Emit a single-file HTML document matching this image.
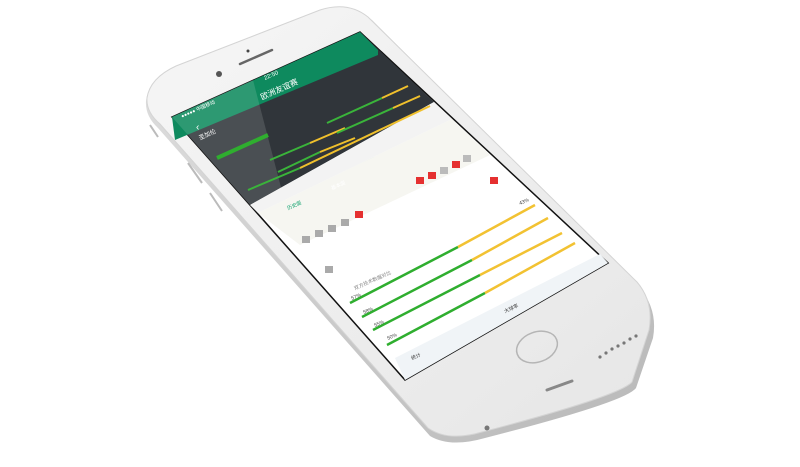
<!DOCTYPE html>
<html><head><meta charset="utf-8"><style>
html,body{margin:0;padding:0;background:#fff;width:800px;height:467px;overflow:hidden}
svg{display:block}
text{font-family:"Liberation Sans","Noto Sans CJK SC",sans-serif}
</style></head><body>
<svg width="800" height="467" viewBox="0 0 800 467" xmlns="http://www.w3.org/2000/svg">
<defs>
<linearGradient id="body" x1="0" y1="0" x2="1" y2="1">
<stop offset="0" stop-color="#f6f6f6"/><stop offset="1" stop-color="#e6e6e6"/>
</linearGradient>
<linearGradient id="edge" x1="0" y1="0" x2="1" y2="1">
<stop offset="0" stop-color="#e0e0e0"/><stop offset="1" stop-color="#b8b8b8"/>
</linearGradient>
</defs>
<path d="M146,101 Q148,80 175,68 L320,12 Q350,2 372,20 L640,288 Q658,310 653,338 L636,388 Q626,402 485,438 Q450,448 430,436 L158,128 Q145,116 146,101 Z" fill="url(#edge)"/>
<path d="M147,98 Q150,78 176,66 L320,10 Q348,1 368,17 L637,282 Q654,302 649,330 L632,382 Q620,396 482,432 Q448,442 428,428 L160,124 Q146,112 147,98 Z" fill="url(#body)" stroke="#d4d4d4" stroke-width="1"/>
<polygon points="172,117 360,32 608,263 405,380" fill="#fff" stroke="#111" stroke-width="1.5"/>
<polygon points="172,117 360,32 434,102 250,205" fill="#30353a"/>
<polygon points="172,117 360,32 378,50 378,55 175,140" fill="#0e8a5e"/>
<polygon points="172,117 253,80 283,195 250,205" fill="#ffffff" opacity="0.13"/>
<polygon points="250,205 434,102 452,119 258,213" fill="#f3f3f3"/>
<polygon points="317,185 374,157 380,168 323,196" fill="#1aa573"/>
<polygon points="258,213 452,119 490,155 300,245" fill="#f6f6f1"/>
<rect x="416" y="177" width="8" height="7" fill="#e53030"/><rect x="428" y="172" width="8" height="7" fill="#e53030"/>
<rect x="440" y="167" width="8" height="7" fill="#bbb"/><rect x="452" y="161" width="8" height="7" fill="#e53030"/>
<rect x="463" y="155" width="8" height="7" fill="#bbb"/><rect x="490" y="177" width="8" height="7" fill="#e53030"/>
<rect x="302" y="236" width="8" height="7" fill="#aaa"/><rect x="315" y="230" width="8" height="7" fill="#aaa"/>
<rect x="328" y="225" width="8" height="7" fill="#aaa"/><rect x="341" y="219" width="8" height="7" fill="#aaa"/>
<rect x="355" y="211" width="8" height="7" fill="#e53030"/>
<rect x="325" y="266" width="8" height="7" fill="#aaa"/>
<g stroke-width="2">
<line x1="270" y1="160" x2="310" y2="143" stroke="#3ab43a"/><line x1="310" y1="143" x2="345" y2="128" stroke="#f0c02c"/>
<line x1="278" y1="172" x2="320" y2="152" stroke="#3ab43a"/><line x1="320" y1="152" x2="355" y2="138" stroke="#f0c02c"/>
<line x1="248" y1="190" x2="300" y2="168" stroke="#3ab43a"/><line x1="300" y1="168" x2="430" y2="106" stroke="#f0c02c"/>
<line x1="327" y1="123" x2="382" y2="98" stroke="#3ab43a"/><line x1="382" y1="98" x2="408" y2="86" stroke="#f0c02c"/>
<line x1="337" y1="133" x2="393" y2="108" stroke="#3ab43a"/><line x1="393" y1="108" x2="420" y2="96" stroke="#f0c02c"/>
<line x1="217" y1="158" x2="268" y2="135" stroke="#2fae2f" stroke-width="4"/>
</g>
<g stroke-width="2.5">
<line x1="350" y1="303" x2="458" y2="247" stroke="#2fae2f"/><line x1="458" y1="247" x2="535" y2="205" stroke="#f2c232"/>
<line x1="362" y1="317" x2="472" y2="260" stroke="#2fae2f"/><line x1="472" y1="260" x2="548" y2="218" stroke="#f2c232"/>
<line x1="373" y1="330" x2="480" y2="275" stroke="#2fae2f"/><line x1="480" y1="275" x2="562" y2="233" stroke="#f2c232"/>
<line x1="387" y1="345" x2="485" y2="293" stroke="#2fae2f"/><line x1="485" y1="293" x2="575" y2="243" stroke="#f2c232"/>
</g>
<polygon points="395,358 600,254 608,263 405,380" fill="#f0f4f7"/>
<g fill="#fff" font-size="8">
<text x="262" y="100" transform="rotate(-24 262 100)">欧洲友谊赛</text>
<text x="265" y="80" transform="rotate(-24 265 80)" font-size="6">22:50</text>
<text x="182" y="118" transform="rotate(-24 182 118)" font-size="5">●●●●● 中国移动</text>
<text x="200" y="140" transform="rotate(-24 200 140)" font-size="6">圣加伦</text>
<text x="196" y="130" font-size="10">‹</text>
</g>
<g fill="#888" font-size="5">
<text x="355" y="290" transform="rotate(-24 355 290)">双方技术数据对比</text>
<text x="352" y="300" transform="rotate(-24 352 300)" fill="#444">57%</text>
<text x="364" y="314" transform="rotate(-24 364 314)" fill="#444">58%</text>
<text x="375" y="327" transform="rotate(-24 375 327)" fill="#444">55%</text>
<text x="388" y="340" transform="rotate(-24 388 340)" fill="#444">50%</text>
<text x="520" y="205" transform="rotate(-24 520 205)" fill="#444">43%</text>
<text x="288" y="210" transform="rotate(-24 288 210)" fill="#1aa573">历史面</text>
<text x="332" y="190" transform="rotate(-24 332 190)" fill="#fff">基本面</text>
<text x="412" y="360" transform="rotate(-24 412 360)" fill="#444">统计</text>
<text x="505" y="313" transform="rotate(-24 505 313)" fill="#444">大球率</text>
</g>
<ellipse cx="537" cy="347" rx="21" ry="15" transform="rotate(-20 537 347)" fill="none" stroke="#b5b5b5" stroke-width="1.5"/>
<line x1="240" y1="64" x2="272" y2="50" stroke="#666" stroke-width="2.5" stroke-linecap="round"/>
<circle cx="248" cy="51" r="1.5" fill="#444"/>
<circle cx="219" cy="74" r="3" fill="#555"/>
<path d="M547,390 L572,381" stroke="#888" stroke-width="3" stroke-linecap="round"/>
<circle cx="487" cy="428" r="2.5" fill="#777"/>
<g fill="#777"><circle cx="600" cy="357" r="1.6"/><circle cx="606" cy="353" r="1.6"/><circle cx="612" cy="349" r="1.6"/><circle cx="618" cy="346" r="1.6"/><circle cx="624" cy="343" r="1.6"/><circle cx="630" cy="339" r="1.6"/><circle cx="636" cy="336" r="1.6"/></g>
<path d="M150,125 L158,137" stroke="#bbb" stroke-width="2"/>
<path d="M188,163 L202,183" stroke="#bbb" stroke-width="2"/>
<path d="M210,193 L222,211" stroke="#bbb" stroke-width="2"/>
</svg>
</body></html>
